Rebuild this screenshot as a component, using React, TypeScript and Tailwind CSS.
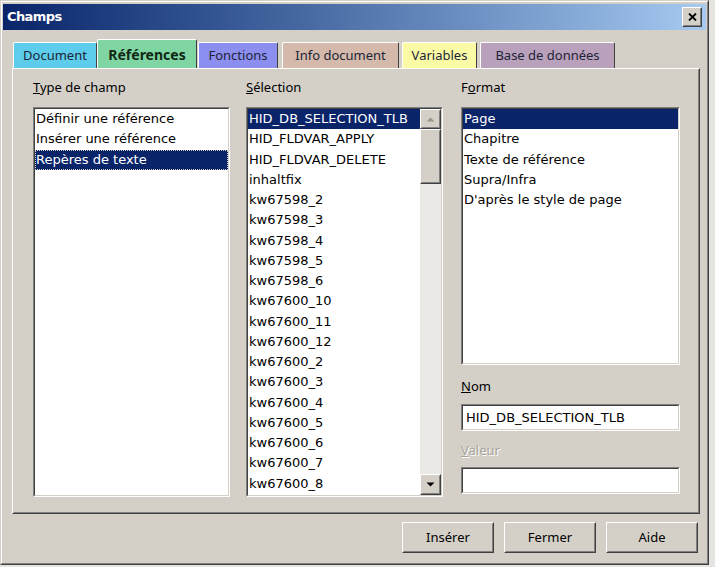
import React from "react";

const F = "font-['Noto_Sans',sans-serif]";

function Sunken({ className = "", children }: { className?: string; children?: React.ReactNode }) {
  return (
    <div className={`border border-t-[#808080] border-l-[#808080] border-r-white border-b-white ${className}`}>
      <div className="h-full w-full border border-t-[#404040] border-l-[#404040] border-r-[#d4d0c8] border-b-[#d4d0c8] bg-white overflow-hidden">
        {children}
      </div>
    </div>
  );
}

function Raised({ className = "", children }: { className?: string; children?: React.ReactNode }) {
  return (
    <div className={`border border-t-white border-l-white border-r-[#404040] border-b-[#404040] ${className}`}>
      <div className="h-full w-full border border-t-[#d4d0c8] border-l-[#d4d0c8] border-r-[#808080] border-b-[#808080] bg-[#d4d0c8] flex items-center justify-center">
        {children}
      </div>
    </div>
  );
}

function ListRows({ items, sel, dotted }: { items: string[]; sel: number; dotted?: boolean }) {
  return (
    <div className="flex flex-col font-['DejaVu_Sans',sans-serif]">
      {items.map((t, i) => (
        <div
          key={t}
          className={`h-[20.25px] leading-[20px] pl-[1px] whitespace-nowrap text-[13px] ${
            i === sel ? "bg-[#0a246a] text-white" : "text-black"
          } ${i === sel && dotted ? "outline-1 outline-dotted outline-offset-[-1px] outline-[#d4d0c8]" : ""}`}
        >
          {t}
        </div>
      ))}
    </div>
  );
}

function Label({ children, disabled, className = "" }: { children: React.ReactNode; disabled?: boolean; className?: string }) {
  return (
    <div
      className={`h-[19px] leading-[19px] text-[13px] ${
        disabled ? "text-[#a8a49c] [text-shadow:1px_1px_0_#ffffff]" : "text-black"
      } ${className}`}
    >
      {children}
    </div>
  );
}

const tabs = [
  { name: "Document", w: "w-[84px]", bg: "bg-[#5dcdeb]", ml: "ml-0", sel: false },
  { name: "Références", w: "w-[100px]", bg: "bg-[#80d6a3]", ml: "ml-0", sel: true },
  { name: "Fonctions", w: "w-[80px]", bg: "bg-[#8c8ef0]", ml: "ml-[1px]", sel: false },
  { name: "Info document", w: "w-[117px]", bg: "bg-[#d5baab]", ml: "ml-[4px]", sel: false },
  { name: "Variables", w: "w-[75px]", bg: "bg-[#fbfba6]", ml: "ml-[3px]", sel: false },
  { name: "Base de données", w: "w-[135px]", bg: "bg-[#b9a0bb]", ml: "ml-[3px]", sel: false },
];

const sel2 = [
  "HID_DB_SELECTION_TLB",
  "HID_FLDVAR_APPLY",
  "HID_FLDVAR_DELETE",
  "inhaltfix",
  "kw67598_2",
  "kw67598_3",
  "kw67598_4",
  "kw67598_5",
  "kw67598_6",
  "kw67600_10",
  "kw67600_11",
  "kw67600_12",
  "kw67600_2",
  "kw67600_3",
  "kw67600_4",
  "kw67600_5",
  "kw67600_6",
  "kw67600_7",
  "kw67600_8",
];

export default function App() {
  return (
    <div className={`w-[715px] h-[567px] bg-[#e6e4e0] ${F}`}>
      <div className="w-[709px] h-[565px] border border-t-[#d4d0c8] border-l-[#d4d0c8] border-r-[#404040] border-b-[#404040]">
        <div className="h-full w-full border border-t-white border-l-white border-r-[#808080] border-b-[#808080] bg-[#d4d0c8] flex flex-col pt-[2px] px-[1px]">
          {/* Title bar */}
          <div className="h-[26px] flex items-center justify-between bg-gradient-to-r from-[#0a246a] to-[#a6caf0] pl-[4px] pr-[4px]">
            <span className="text-white font-bold text-[13px] font-['DejaVu_Sans',sans-serif] tracking-[-0.6px]">Champs</span>
            <Raised className="w-[20px] h-[20px]">
              <svg width="9" height="8" viewBox="0 0 9 8">
                <path d="M1 0.5 L8 7.5 M8 0.5 L1 7.5" stroke="#000" strokeWidth="1.8" />
              </svg>
            </Raised>
          </div>

          {/* Tabs */}
          <div className="mt-[9px] ml-[10px] h-[29px] flex items-end">
            {tabs.map((t) => (
              <div
                key={t.name}
                className={`${t.w} ${t.bg} ${t.ml} ${t.sel ? "h-[29px] font-bold text-[#102814] text-[14px]" : "h-[26px] text-[#1c2438] text-[13px]"} border-t border-l border-r border-t-white border-l-white border-r-[#404040] rounded-t-[2px] flex items-center justify-center`}
              >
                {t.name}
              </div>
            ))}
          </div>

          {/* Panel */}
          <div className="ml-[9px] w-[688px] h-[446px] border border-t-white border-l-white border-r-[#404040] border-b-[#404040]">
            <div className="h-full w-full border border-t-[#d4d0c8] border-l-[#d4d0c8] border-r-[#808080] border-b-[#808080] flex pl-[19px] pt-[8px] gap-[16px]">
              {/* Column 1 */}
              <div className="w-[197px] flex flex-col">
                <Label className="mb-[10px]">
                  <u>T</u>ype de champ
                </Label>
                <Sunken className="h-[390px]">
                  <ListRows items={["Définir une référence", "Insérer une référence", "Repères de texte"]} sel={2} dotted />
                </Sunken>
              </div>

              {/* Column 2 */}
              <div className="w-[197px] flex flex-col">
                <Label className="mb-[10px]">
                  <u>S</u>élection
                </Label>
                <Sunken className="h-[390px]">
                  <div className="flex h-full">
                    <div className="flex-1 min-w-0">
                      <ListRows items={sel2} sel={0} />
                    </div>
                    <div className="w-[21px] h-full bg-[#ebe9e5] flex flex-col">
                      <Raised className="w-[21px] h-[20px]">
                        <svg width="9" height="5" viewBox="0 0 9 5">
                          <path d="M0.5 4.5 L4.5 0.5 L8.5 4.5 Z" fill="#9a968e" />
                        </svg>
                      </Raised>
                      <Raised className="w-[21px] h-[55px]" />
                      <div className="flex-1" />
                      <Raised className="w-[21px] h-[21px]">
                        <svg width="9" height="5" viewBox="0 0 9 5">
                          <path d="M0.5 0.5 L8.5 0.5 L4.5 4.5 Z" fill="#000" />
                        </svg>
                      </Raised>
                    </div>
                  </div>
                </Sunken>
              </div>

              {/* Column 3 */}
              <div className="w-[219px] flex flex-col ml-[2px]">
                <Label className="mb-[10px]">
                  F<u>o</u>rmat
                </Label>
                <Sunken className="h-[258px]">
                  <ListRows items={["Page", "Chapitre", "Texte de référence", "Supra/Infra", "D'après le style de page"]} sel={0} />
                </Sunken>
                <Label className="mt-[12px]">
                  <u>N</u>om
                </Label>
                <Sunken className="mt-[8px] h-[27px]">
                  <div className="h-full leading-[23px] pl-[3px] text-[13px] text-black font-['DejaVu_Sans',sans-serif]">HID_DB_SELECTION_TLB</div>
                </Sunken>
                <Label disabled className="mt-[10px]">
                  <u>V</u>aleur
                </Label>
                <Sunken className="mt-[7px] h-[27px]" />
              </div>
            </div>
          </div>

          {/* Buttons */}
          <div className="mt-[8px] flex justify-end gap-[10px] pr-[8px]">
            {["Insérer", "Fermer", "Aide"].map((b) => (
              <Raised key={b} className="w-[92px] h-[31px]">
                <span className="text-[13px] text-black">{b}</span>
              </Raised>
            ))}
          </div>
        </div>
      </div>
    </div>
  );
}
